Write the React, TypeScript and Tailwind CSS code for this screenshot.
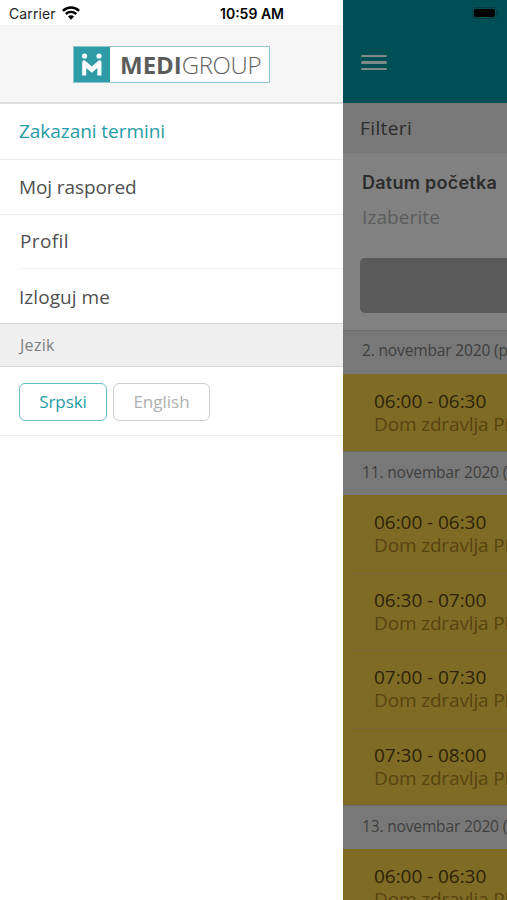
import clsx from 'clsx';

const menuItems = [
  { label: 'Zakazani termini', row: 'h-[56px] pl-[19px] border-b border-[#ececec]', text: 'text-[#1f9ca6] tracking-[-0.05px]' },
  { label: 'Moj raspored', row: 'h-[55px] pl-[19px] border-b border-[#ececec]', text: 'text-[#4f4f4f] tracking-[-0.1px]' },
  { label: 'Profil', row: 'h-[54px] ml-[19px] pl-[1px] pb-[1px] border-b border-[#f0f0f0]', text: 'text-[#4f4f4f] tracking-[0.4px]' },
  { label: 'Izloguj me', row: 'h-[54px] pl-[19px] pt-[2px]', text: 'text-[#4f4f4f] tracking-[0.05px]' },
];

const days = [
  { date: '2. novembar 2020 (ponedeljak)', slots: ['06:00 - 06:30'] },
  { date: '11. novembar 2020 (sreda)', slots: ['06:00 - 06:30', '06:30 - 07:00', '07:00 - 07:30', '07:30 - 08:00'] },
  { date: '13. novembar 2020 (petak)', slots: ['06:00 - 06:30'] },
];

const WifiIcon = () => (
  <svg width="18" height="14" viewBox="0 0 18 14" fill="none">
    <path d="M.9 4.9C5.4 .5 12.6 .5 17.1 4.9" stroke="#000" strokeWidth="2.5" />
    <path d="M3.8 8C6.8 5.2 11.2 5.2 14.2 8" stroke="#000" strokeWidth="2.4" />
    <path d="M9 13.7L5.9 10.5C7.7 8.9 10.3 8.9 12.1 10.5Z" fill="#000" />
  </svg>
);

const Logo = () => (
  <div className="flex w-[197px] h-[37px] bg-white border border-[#8cc8cd]">
    <div className="w-[36px] h-[35px] bg-[#2e9ba6]">
      <svg width="36" height="35" viewBox="0 0 36 35" fill="none">
        <circle cx="10.6" cy="9" r="2.6" fill="#fff" />
        <circle cx="25" cy="9" r="2.6" fill="#fff" />
        <path d="M8.4 28.2V15.6Q8.4 13.2 10.6 13.6L17.8 19.8L25 13.6Q27.2 13.2 27.2 15.6V28.2H23.6V20.6L17.8 25.4L12 20.6V28.2Z" fill="#fff" stroke="#fff" strokeWidth=".5" strokeLinejoin="round" />
      </svg>
    </div>
    <div className="flex items-center pl-[10px] text-[24px] leading-none whitespace-nowrap text-[#626262]">
      <span className="font-bold text-[#5c5c5c]">MEDI</span>
      <span className="font-light tracking-[-0.4px]">GROUP</span>
    </div>
  </div>
);

const Drawer = () => (
  <aside className="w-[343px] shrink-0 bg-white">
    <div className="flex h-[25px] items-center pl-[9px] pt-[2px] font-['Inter','Liberation_Sans',sans-serif] text-[14px] text-[#222]">
      <span className="w-[47px] tracking-[0.1px]">Carrier</span>
      <span className="ml-[6px] -mt-[2px]"><WifiIcon /></span>
      <span className="ml-[140px] whitespace-nowrap font-semibold text-black text-[14px]">10:59 AM</span>
    </div>
    <div className="flex h-[79px] justify-center border-b-2 border-[#dedede] bg-[#f5f5f5] pt-[21px]">
      <Logo />
    </div>
    <nav>
      {menuItems.map((item) => (
        <div key={item.label} className={clsx('flex items-center text-[19px]', item.row)}>
          <span className={item.text}>{item.label}</span>
        </div>
      ))}
    </nav>
    <div className="flex h-[44px] items-center border-y border-[#d6d6d6] bg-[#efefef] pb-px pl-[20px] text-[16px] tracking-[0.3px] text-[#808080]">
      Jezik
    </div>
    <div className="flex h-[69px] gap-[6px] border-b border-[#ececec] pl-[19px] pt-[16px] text-[17px]">
      <button className="h-[38px] w-[88px] rounded-[6px] border-[1.5px] border-[#66bec5] font-medium text-[#1f9ca6] tracking-[-0.1px]">Srpski</button>
      <button className="h-[38px] w-[97px] rounded-[6px] border-[1.5px] border-[#cfcfcf] text-[#b0b0b0]">English</button>
    </div>
  </aside>
);

const Schedule = () => (
  <main className="min-w-0 flex-1 overflow-hidden whitespace-nowrap bg-[#7f6c24]">
    <header className="flow-root h-[103px] bg-[#004f55]">
      <div className="flex h-[25px] justify-end pr-[8px] pt-[7px]">
        <div className="h-[12px] w-[25px] rounded-[3px] border border-[#003e43] p-px">
          <div className="h-[8px] w-full rounded-[2px] bg-black" />
        </div>
        <div className="mt-[4px] ml-px h-[4px] w-px bg-[#003e43]" />
      </div>
      <div className="ml-[18px] mt-[30px] flex w-[26px] flex-col gap-[4px]">
        <div className="h-[2.4px] rounded-full bg-[#7f8a8a]" />
        <div className="h-[2.4px] rounded-full bg-[#7f8a8a]" />
        <div className="h-[2.4px] rounded-full bg-[#7f8a8a]" />
      </div>
    </header>
    <div className="flex h-[50px] items-center bg-[#787878] pl-[17px] text-[19px] tracking-[0.4px] text-[#2c2c2c]">Filteri</div>
    <div className="h-[176.5px] bg-[#818181] pl-[18px] pt-[17px]">
      <div className="pl-[1px] font-['Inter','Liberation_Sans',sans-serif] text-[18px] font-semibold leading-[25px] tracking-[0.25px] text-[#2c2c2c]">Datum početka</div>
      <div className="mt-[9px] pl-px text-[19px] leading-[26px] tracking-[0.1px] text-[#5c5c5c]">Izaberite</div>
      <div className="-ml-[1px] mt-[28px] h-[55px] w-[300px] rounded-[5px] bg-[#5a5a5a]" />
    </div>
    {days.map((day) => (
      <section key={day.date}>
        <div className="flex h-[44px] items-center border-t border-[#6c6c6c] bg-[#787878] pb-[2px] pl-[19px] text-[15.5px] tracking-[-0.15px] text-[#3f3f3f]">
          {day.date}
        </div>
        {day.slots.map((slot, i) => (
          <div key={slot} className="flex h-[77.5px] flex-col">
            <div className={clsx('ml-[9px] h-px shrink-0', i > 0 && 'bg-[#7c6439]')} />
            <div className="pl-[31px] pt-[15px] text-[19px] leading-[23px]">
              <div className="text-[#2d220a] tracking-[-0.05px]">{slot}</div>
              <div className="text-[#574411] tracking-[-0.15px]">Dom zdravlja PROMEDIKA</div>
            </div>
          </div>
        ))}
      </section>
    ))}
  </main>
);

const App = () => (
  <div className="flex h-[900px] w-[507px] overflow-hidden font-['Open_Sans','Noto_Sans',sans-serif]">
    <Drawer />
    <Schedule />
  </div>
);

export default App;
